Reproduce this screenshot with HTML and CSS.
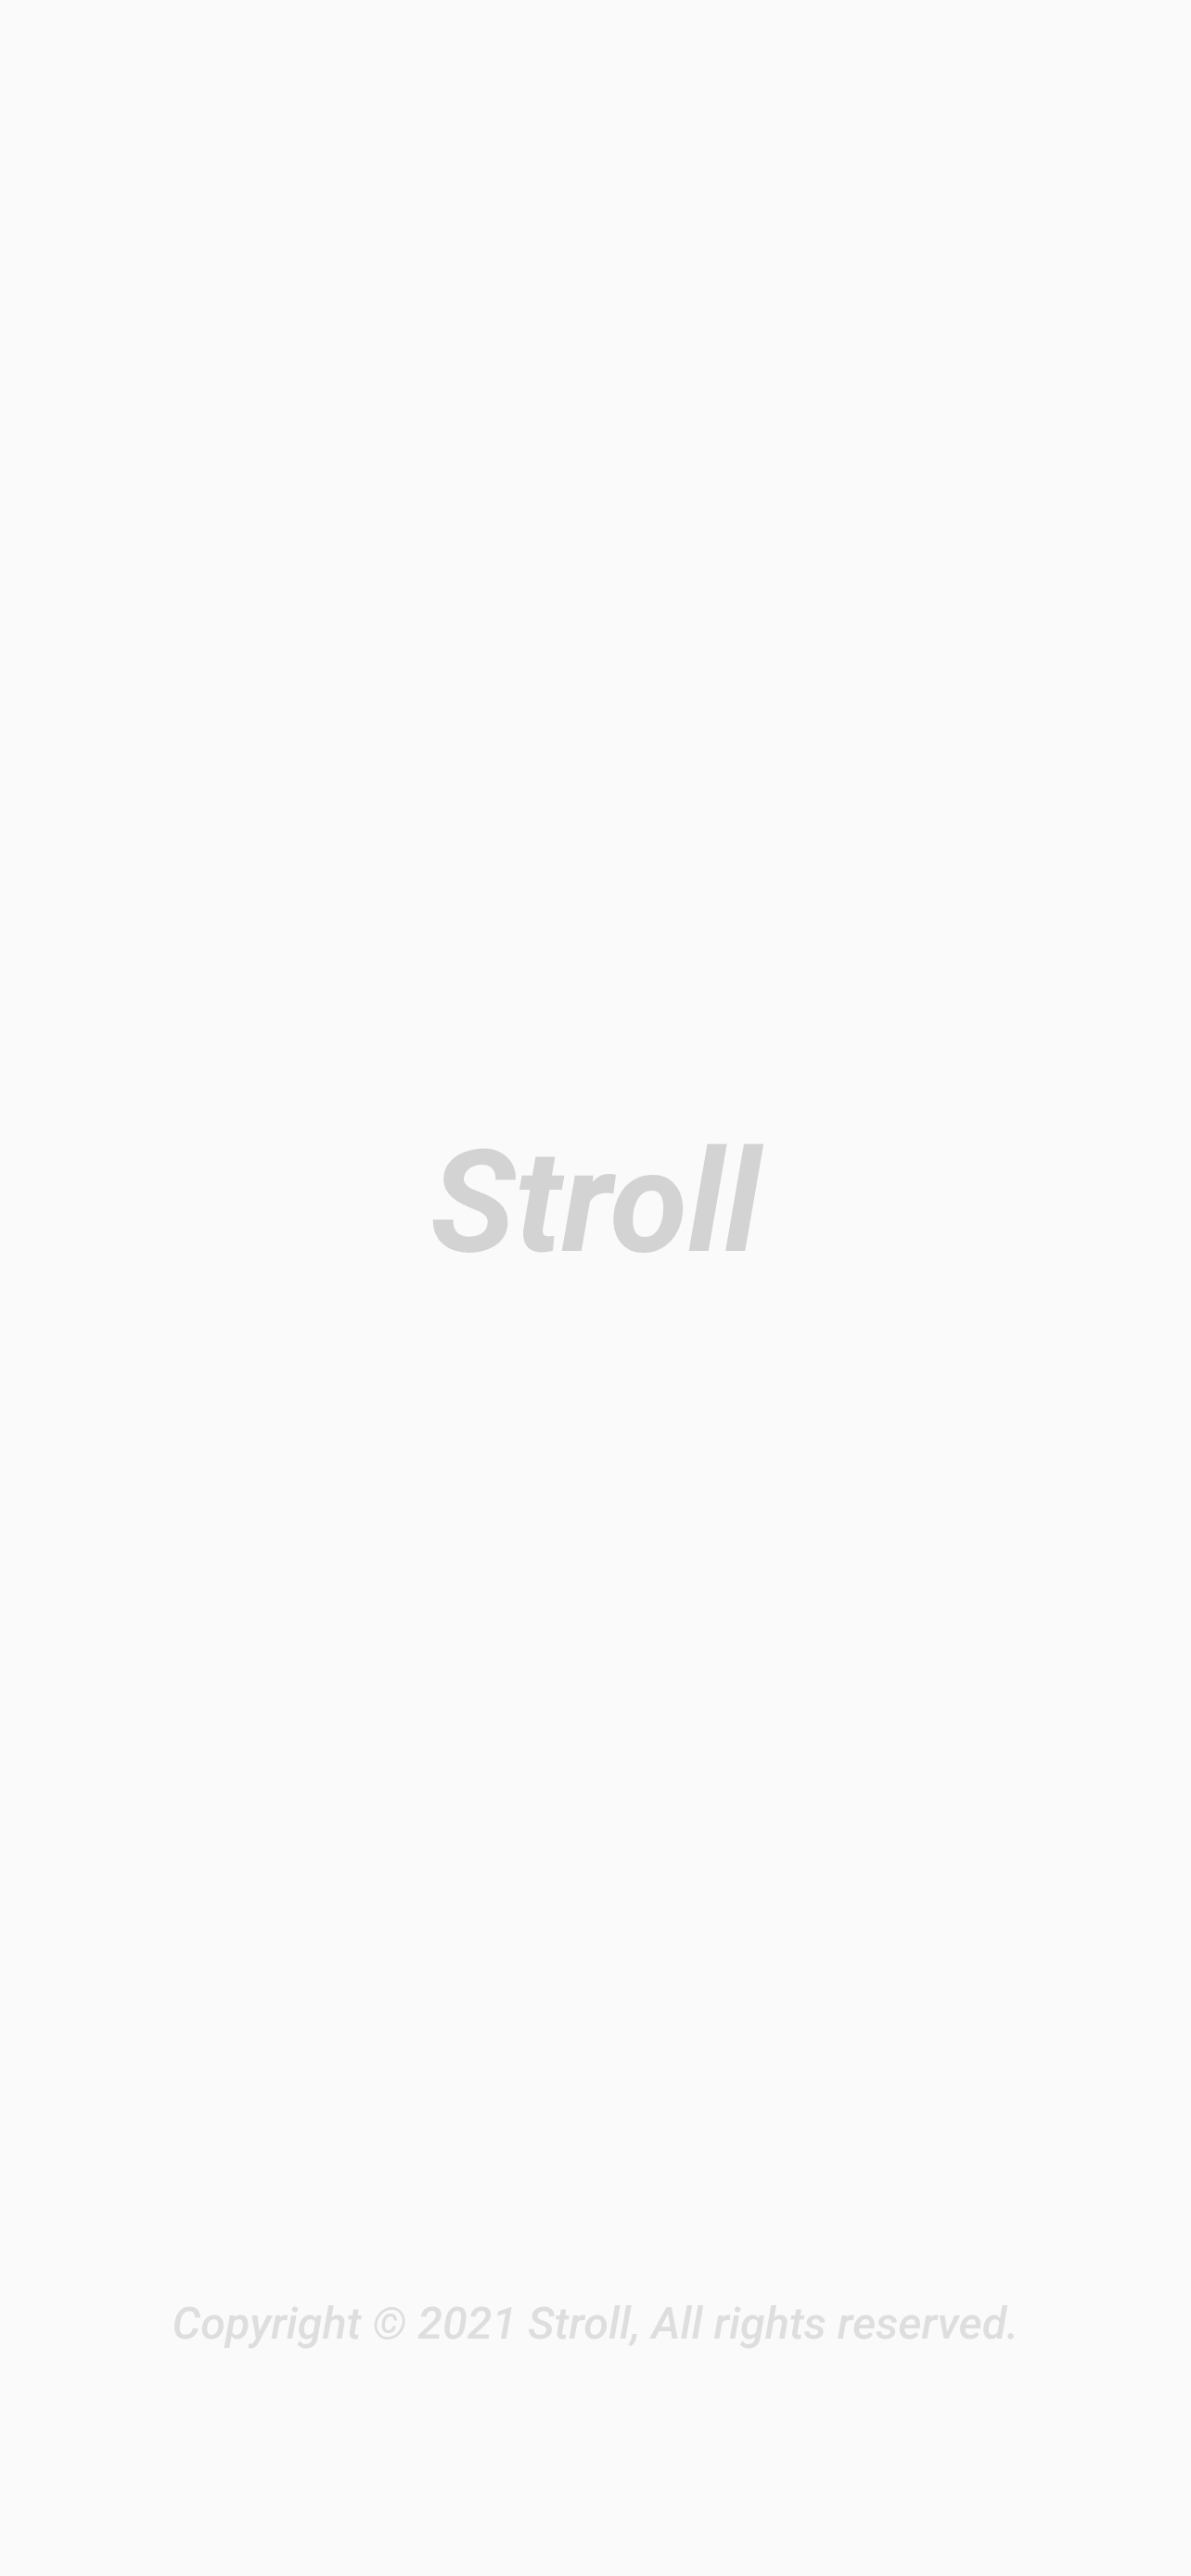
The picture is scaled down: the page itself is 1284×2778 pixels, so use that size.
FILE: index.html
```html
<!DOCTYPE html>
<html lang="en">
<head>
<meta charset="utf-8">
<title>Stroll</title>
<link rel="stylesheet" href="styles.css">
</head>
<body>
<main class="splash">
  <div class="brand">
    <h1 class="logo">Stroll</h1>
  </div>
  <footer class="footer">
    <p class="copyright">Copyright © 2021 Stroll, All rights reserved.</p>
  </footer>
</main>
</body>
</html>
```
FILE: styles.css
```css
html, body {
  margin: 0;
  padding: 0;
  background: #fafafa;
}
.splash {
  min-height: 100vh;
  display: flex;
  flex-direction: column;
  box-sizing: border-box;
  font-family: Roboto, "Liberation Sans", sans-serif;
}
.brand {
  flex: 1;
  display: flex;
  justify-content: center;
  padding-top: 1220px;
}
.logo {
  margin: 0;
  font-size: 153px;
  line-height: 1;
  font-weight: 700;
  font-style: italic;
  color: #d3d3d3;
}
.footer {
  display: flex;
  justify-content: center;
  padding-bottom: 248px;
}
.copyright {
  margin: 0;
  font-size: 48.5px;
  line-height: 1;
  font-weight: 500;
  font-style: italic;
  color: #dedede;
}
```
